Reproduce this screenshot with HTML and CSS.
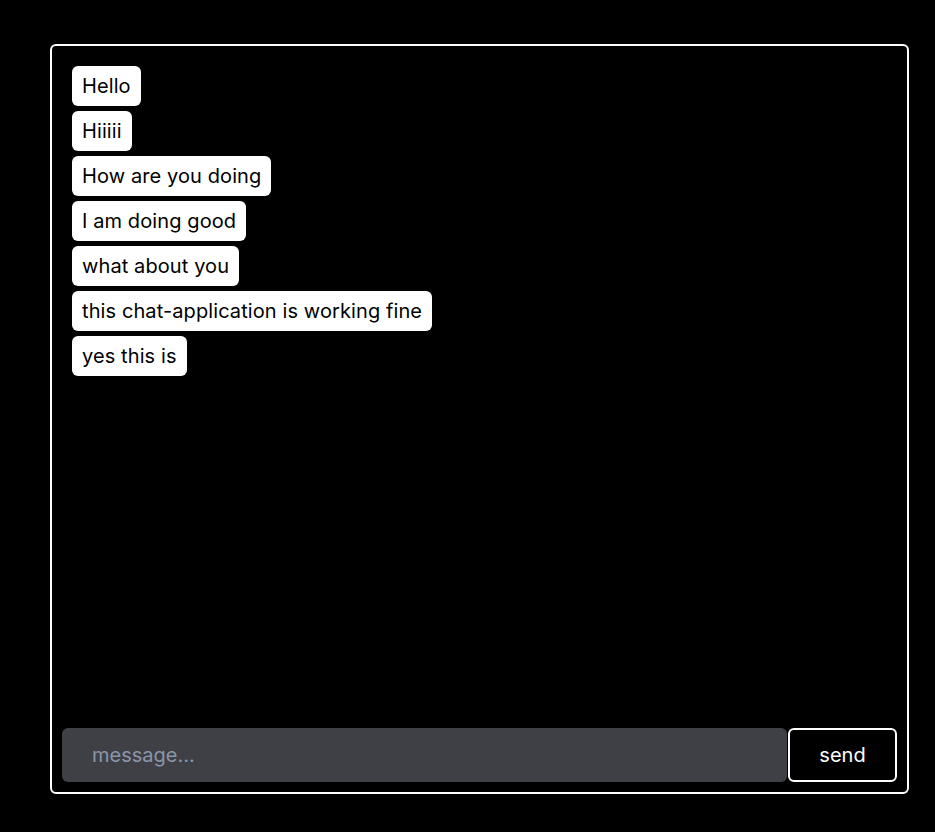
FILE: index.html
```html
<!DOCTYPE html>
<html lang="en">
<head>
<meta charset="utf-8">
<title>Chat</title>
<link rel="stylesheet" href="styles.css">
</head>
<body>
<div class="chat">
  <div class="messages">
    <div class="msg">Hello</div>
    <div class="msg">Hiiiii</div>
    <div class="msg">How are you doing</div>
    <div class="msg">I am doing good</div>
    <div class="msg">what about you</div>
    <div class="msg">this chat-application is working fine</div>
    <div class="msg">yes this is</div>
  </div>
  <form class="composer" onsubmit="return false">
    <input class="input" type="text" placeholder="message...">
    <button class="send" type="submit">send</button>
  </form>
</div>
</body>
</html>
```
FILE: styles.css
```css
html, body {
  margin: 0;
  padding: 0;
  background: #000;
  font-family: Inter, "Noto Sans", sans-serif;
}
body {
  padding: 44px 26px 0 50px;
}
.chat {
  box-sizing: border-box;
  width: 859px;
  height: 750px;
  border: 2px solid #fff;
  border-radius: 6px;
  display: flex;
  flex-direction: column;
}
.messages {
  flex: 1;
  padding: 20px;
  display: flex;
  flex-direction: column;
  align-items: flex-start;
  gap: 5px;
}
.msg {
  background: #fff;
  color: #000;
  font-size: 20px;
  line-height: 24px;
  letter-spacing: 0.1px;
  padding: 8px 10px;
  border-radius: 6px;
}
.composer {
  display: flex;
  gap: 1px;
  padding: 0 10px 10px 10px;
  margin: 0;
}
.input {
  width: 725px;
  flex: none;
  height: 54px;
  box-sizing: border-box;
  border: none;
  outline: none;
  background: #3f4045;
  border-radius: 6px;
  padding: 0 30px;
  font-family: Inter, "Noto Sans", sans-serif;
  font-size: 20px;
  color: #fff;
}
.input::placeholder {
  color: #8a96a8;
}
.send {
  width: 109px;
  height: 54px;
  box-sizing: border-box;
  background: #000;
  color: #fff;
  border: 2px solid #fff;
  border-radius: 6px;
  font-family: Inter, "Noto Sans", sans-serif;
  font-size: 20px;
  cursor: pointer;
}
```
